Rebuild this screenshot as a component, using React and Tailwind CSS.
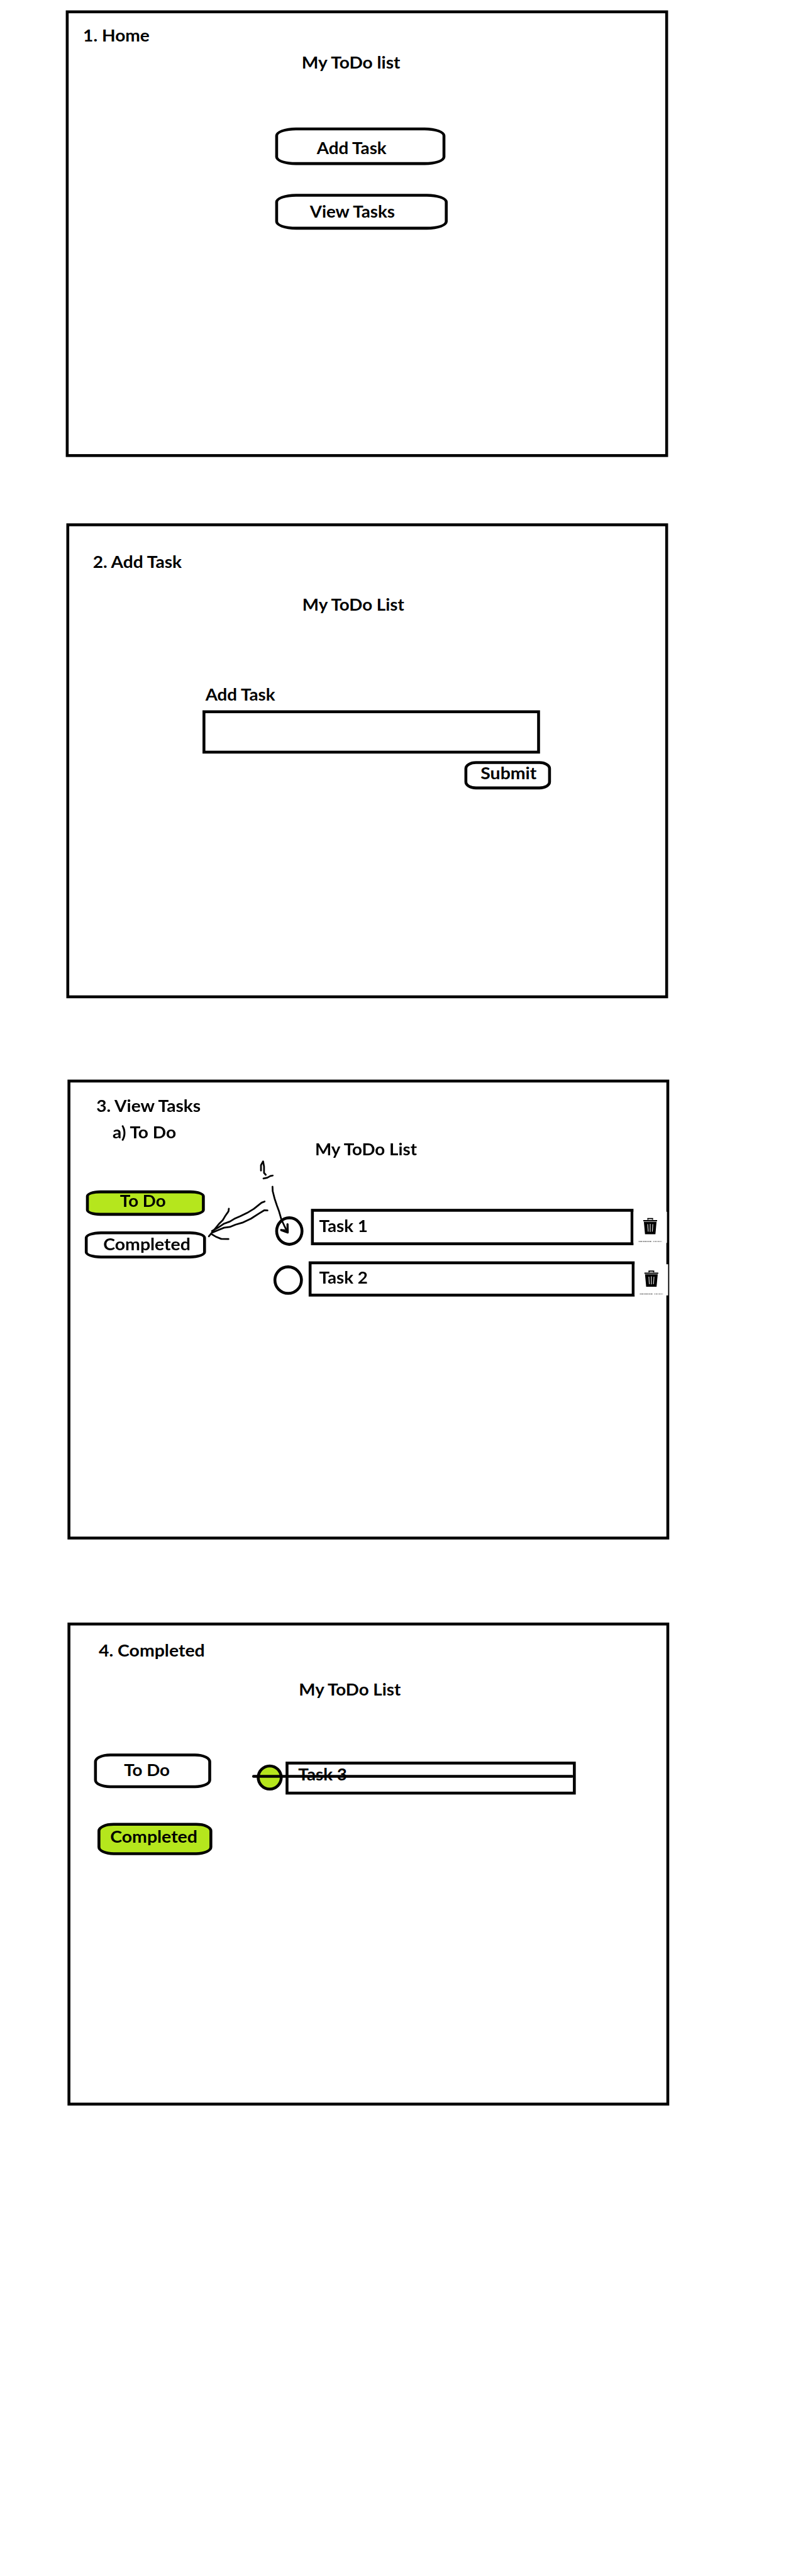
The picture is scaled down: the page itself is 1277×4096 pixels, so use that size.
const TEXT = "block w-max whitespace-nowrap font-['Lato','Liberation_Sans',sans-serif] text-[28.7px] leading-[30px] font-bold text-black origin-left";

const STRETCH = {
  sm: "scale-x-[1.053]",
  md: "scale-x-[1.068]",
  lg: "scale-x-[1.08]",
};

function Label({ stretch = "sm", className = "", children }) {
  return <span className={`${TEXT} ${STRETCH[stretch]} ${className}`}>{children}</span>;
}

function Panel({ className = "", children }) {
  return (
    <section className={`relative flex flex-col items-start border-[5px] border-black bg-white ${className}`}>
      {children}
    </section>
  );
}

function Button({ className = "", children }) {
  return <button className={`flex items-start border-[5px] border-black ${className}`}>{children}</button>;
}

function TrashCell() {
  return (
    <div className="relative mt-[5px] h-[54px] w-[58px] shrink-0 bg-white">
      <svg className="h-[54px] w-[58px]" viewBox="0 0 58 54">
        <path d="M17 15.5h24M25 14v-2.2h8V14" fill="none" stroke="#000" strokeWidth="2" />
        <path d="M18 17.5h22l-2 21.5H20z" fill="#000" />
        <path d="M24.7 21.5l.8 13M29 21v14M33.5 21.5l-.8 13" stroke="#ddd" strokeWidth="1.3" />
        <path d="M9 51.5h22" stroke="#777" strokeWidth="1.6" strokeDasharray="2 .7 3 .8 1 .6" />
        <path d="M34 51.5h15" stroke="#888" strokeWidth="1.4" strokeDasharray="1.5 1 2.5 .8" />
      </svg>
    </div>
  );
}

function Annotation() {
  return (
    <svg
      className="pointer-events-none absolute left-[228px] top-[124px] h-[150px] w-[160px]"
      viewBox="750 30 480 450"
      fill="none"
      stroke="#000"
      strokeWidth="9"
      strokeLinecap="round"
      strokeLinejoin="round"
    >
      <path d="M1057 116V88L1068 68L1073 95V128L1082 138" />
      <path d="M1070 157L1090 153L1106 144L1118 142" />
      <path d="M1117 200L1118 223L1128 262L1140 298L1150 325L1163 370L1178 402L1195 436" />
      <path d="M1195 395L1196 438L1162 425L1180 427" strokeWidth="11" />
      <path d="M1076 277L1060 283L1020 315L985 336L950 353L918 367L895 381L865 392L835 412L802 430" />
      <path d="M1091 323L1075 322L1045 340L1005 366L960 387L925 397L895 409L865 413L830 427L805 438" />
      <path d="M890 314L888 328L870 354L858 374L838 394L820 416L786 458" />
      <path d="M803 448L825 461L850 471L888 472" />
    </svg>
  );
}

function HomePanel() {
  return (
    <Panel className="ml-[114px] mt-[18px] h-[774px] w-[1044px]">
      <Label stretch="md" className="mt-[23px] ml-[25px]">1. Home</Label>
      <Label stretch="md" className="mt-[17px] ml-[404px]">My ToDo list</Label>
      <Button className="mt-[98px] ml-[358px] h-[65px] w-[295px] pl-[67px] pt-[15px] [border-radius:36px_/_14px]">
        <Label>Add Task</Label>
      </Button>
      <Button className="mt-[50px] ml-[358px] h-[62px] w-[299px] pl-[55px] pt-[10px] [border-radius:36px_/_14px]">
        <Label>View Tasks</Label>
      </Button>
    </Panel>
  );
}

function AddTaskPanel() {
  return (
    <Panel className="ml-[115px] mt-[115px] h-[823px] w-[1043px]">
      <Label stretch="md" className="mt-[46px] ml-[41px]">2. Add Task</Label>
      <Label className="mt-[44px] ml-[404px]">My ToDo List</Label>
      <Label className="mt-[126px] ml-[236px]">Add Task</Label>
      <div className="mt-[13px] ml-[231px] h-[75px] w-[585px] border-[5px] border-black" />
      <Button className="mt-[13px] ml-[685px] h-[49px] w-[150px] pl-[23px] [border-radius:20px_/_13px]">
        <Label stretch="lg">Submit</Label>
      </Button>
    </Panel>
  );
}

function ViewTasksPanel() {
  return (
    <Panel className="ml-[117px] mt-[141px] h-[797px] w-[1043px]">
      <Label stretch="md" className="mt-[25px] ml-[45px]">3. View Tasks</Label>
      <Label stretch="md" className="mt-[16px] ml-[73px]">a) To Do</Label>
      <Label className="-mt-px ml-[424px]">My ToDo List</Label>
      <div className="mt-[57px] ml-[25px] flex items-start">
        <div className="w-[210px]">
          <Button className="ml-[2px] h-[44px] w-[206px] bg-[#b5e61d] pl-[54px] [border-radius:25px_/_10px]">
            <Label className="-mt-[2px]">To Do</Label>
          </Button>
          <Button className="mt-[27px] h-[47px] w-[210px] pl-[27px] pt-[2px] [border-radius:28px_/_11px]">
            <Label stretch="lg">Completed</Label>
          </Button>
        </div>
        <div className="ml-[117px] mt-[32px]">
          <div className="flex h-[63px] items-start">
            <div className="ml-[3px] mt-[13px] h-[51px] w-[49px] rounded-[50%] border-[5px] border-black" />
            <div className="ml-[13px] h-[63px] w-[559px] border-[5px] border-black pl-[9px] pt-[9px]">
              <Label>Task 1</Label>
            </div>
            <TrashCell />
          </div>
          <div className="mt-[28px] flex items-start">
            <div className="mt-[7px] h-[51px] w-[51px] rounded-[50%] border-[5px] border-black" />
            <div className="ml-[10px] h-[61px] w-[565px] border-[5px] border-black pl-[13px] pt-[8px]">
              <Label>Task 2</Label>
            </div>
            <TrashCell />
          </div>
        </div>
      </div>
      <Annotation />
    </Panel>
  );
}

function CompletedPanel() {
  return (
    <Panel className="ml-[117px] mt-[144px] h-[837px] w-[1043px]">
      <Label stretch="lg" className="mt-[28px] ml-[49px]">4. Completed</Label>
      <Label className="mt-[37px] ml-[396px]">My ToDo List</Label>
      <div className="mt-[97px] ml-[41px] flex items-start">
        <div className="w-[205px]">
          <Button className="h-[60px] w-[203px] pl-[47px] pt-[8px] [border-radius:28px_/_14px]">
            <Label>To Do</Label>
          </Button>
          <Button className="mt-[60px] ml-[6px] h-[56px] w-[199px] bg-[#b5e61d] pl-[17px] pt-[4px] [border-radius:28px_/_14px]">
            <Label stretch="lg">Completed</Label>
          </Button>
        </div>
        <div className="relative ml-[77px] mt-[14px] flex items-start">
          <div className="mt-[5px] h-[45px] w-[45px] rounded-[50%] border-[5px] border-black bg-[#b5e61d]" />
          <div className="ml-[5px] h-[57px] w-[503px] border-[5px] border-black pl-[17px] pt-[2px]">
            <Label>Task 3</Label>
          </div>
          <div className="absolute -left-[8px] top-[23px] h-[5px] w-[557px] rounded-full bg-black" />
        </div>
      </div>
    </Panel>
  );
}

export default function App() {
  return (
    <div className="h-[4096px] w-[1277px] overflow-hidden bg-white">
      <main className="flex h-[4464px] w-[1392px] origin-top-left scale-[0.9175] flex-col items-start">
        <HomePanel />
        <AddTaskPanel />
        <ViewTasksPanel />
        <CompletedPanel />
      </main>
    </div>
  );
}
